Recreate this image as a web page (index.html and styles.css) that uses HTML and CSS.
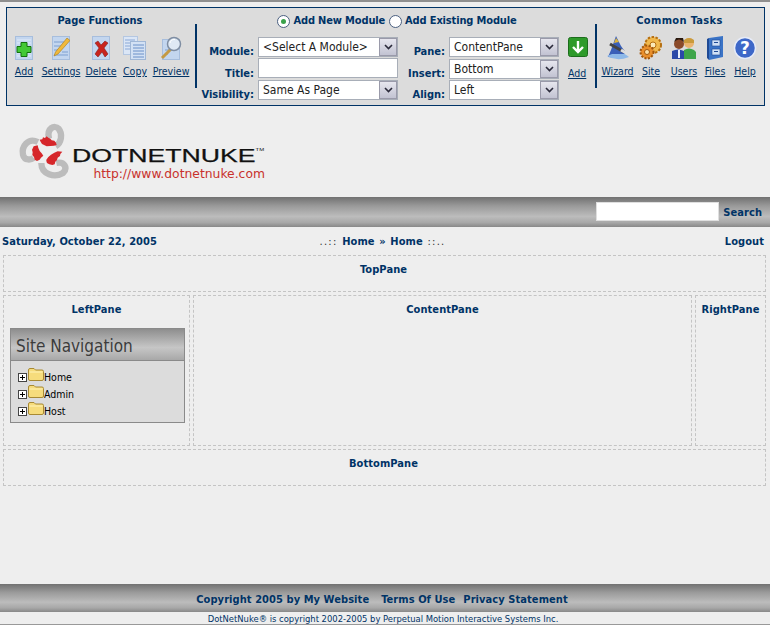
FILE: index.html
```html
<!DOCTYPE html>
<html lang="en">
<head>
<meta charset="utf-8">
<title>Home</title>
<link rel="stylesheet" href="styles.css">
</head>
<body>
<div class="page">
  <section class="panel">
    <div class="group group-left">
      <h3 class="group-title">Page Functions</h3>
      <div class="tools">
        <a class="tool t-add" href="#"><svg class="ico" viewBox="0 0 18 24"><rect x=".5" y=".5" width="17" height="23" fill="#c3d6ef" stroke="#a7bedd"/><path d="M2 4h14M2 7h14M2 17h14M2 20h14" stroke="#e2ecf9"/><path d="M6 6.500h6v4h4v6h-4v4H6v-4H2v-6h4z" fill="#43c936" stroke="#14700e"/></svg><span>Add</span></a>
        <a class="tool t-settings" href="#"><svg class="ico" viewBox="0 0 18 24"><rect x=".5" y=".5" width="17" height="23" fill="#c3d6ef" stroke="#a7bedd"/><path d="M2 6h12M2 10h9M2 14h6M10 16h6M2 19h14" stroke="#7d9fd0"/><path d="M15 2l3 2.500L6 18l-4 2 1.500-4z" fill="#f0b93c" stroke="#a87a18" stroke-width=".6"/></svg><span>Settings</span></a>
        <a class="tool t-delete" href="#"><svg class="ico" viewBox="0 0 18 24"><rect x=".5" y=".5" width="17" height="23" fill="#c3d6ef" stroke="#a7bedd"/><path d="M3 7l3-2 3 4 4-4 3 2-4 5 4 6-3 3-3-5-4 5-3-3 4-6z" fill="#c8241e" stroke="#7a1512" stroke-width=".5"/></svg><span>Delete</span></a>
        <a class="tool t-copy" href="#"><svg class="ico" viewBox="0 0 24 24"><rect x=".5" y=".5" width="14" height="18" fill="#dbe6f6" stroke="#b4c7e2"/><path d="M2 4h10M2 7h10M2 10h10M2 13h10" stroke="#8aa8d6"/><rect x="7.500" y="5.500" width="15" height="18" fill="#d3e1f4" stroke="#a0b7d6"/><path d="M10 9h11M10 12h11M10 15h11M10 18h11M10 21h11" stroke="#6a90c8"/></svg><span>Copy</span></a>
        <a class="tool t-preview" href="#"><svg class="ico" viewBox="0 0 22 24"><rect x="2.500" y="3.500" width="17" height="20" fill="#c3d6ef" stroke="#a7bedd"/><path d="M5 14h4M5 18h3" stroke="#7d9fd0"/><path d="M11 13L2 22" stroke="#c49a44" stroke-width="3"/><circle cx="14" cy="8" r="6.500" fill="#dfe9f4" stroke="#7f8ea3" stroke-width="1.500"/><path d="M10 7a4.500 4.500 0 0 1 5-3.500" stroke="#fff" fill="none"/></svg><span>Preview</span></a>
      </div>
    </div>
    <div class="group group-mid">
      <div class="radios">
        <label class="radio"><span class="dot on"></span>Add New Module</label>
        <label class="radio"><span class="dot"></span>Add Existing Module</label>
      </div>
      <div class="form">
        <label class="f-lab">Module:</label>
        <div class="sel s-wide"><select><option>&lt;Select A Module&gt;</option></select><i class="arrow"><svg viewBox="0 0 9 6"><path d="M1 1l3.500 3.500L8 1" fill="none" stroke="#2a2a3a" stroke-width="1.600"/></svg></i></div>
        <label class="f-lab">Pane:</label>
        <div class="sel s-narrow"><select><option>ContentPane</option></select><i class="arrow"><svg viewBox="0 0 9 6"><path d="M1 1l3.500 3.500L8 1" fill="none" stroke="#2a2a3a" stroke-width="1.600"/></svg></i></div>
        <svg class="go" viewBox="0 0 20 20"><rect x=".5" y=".5" width="19" height="19" rx="2" fill="#2e9a2a" stroke="#1c6d1c"/><path d="M10 4v11M5 10l5 5 5-5" fill="none" stroke="#fff" stroke-width="2.400"/></svg>
        <label class="f-lab">Title:</label>
        <input class="txt s-wide" type="text">
        <label class="f-lab">Insert:</label>
        <div class="sel s-narrow s-insert"><select><option>Bottom</option></select><i class="arrow"><svg viewBox="0 0 9 6"><path d="M1 1l3.500 3.500L8 1" fill="none" stroke="#2a2a3a" stroke-width="1.600"/></svg></i></div>
        <a class="go-add" href="#">Add</a>
        <label class="f-lab">Visibility:</label>
        <div class="sel s-wide"><select><option>Same As Page</option></select><i class="arrow"><svg viewBox="0 0 9 6"><path d="M1 1l3.500 3.500L8 1" fill="none" stroke="#2a2a3a" stroke-width="1.600"/></svg></i></div>
        <label class="f-lab">Align:</label>
        <div class="sel s-narrow"><select><option>Left</option></select><i class="arrow"><svg viewBox="0 0 9 6"><path d="M1 1l3.500 3.500L8 1" fill="none" stroke="#2a2a3a" stroke-width="1.600"/></svg></i></div>
      </div>
    </div>
    <div class="group group-right">
      <h3 class="group-title">Common Tasks</h3>
      <div class="tools tools-right">
        <a class="tool" href="#"><svg class="ico ico-l" viewBox="0 0 24 24"><path d="M10 0l5 10 5 7-7 5-11-1 3-7z" fill="#3a5fb8"/><path d="M1 20q10 6 22 1l-4-3H6z" fill="#8db8e8"/><path d="M4 8l14 8" stroke="#444" stroke-width="3"/><path d="M15 14l6 3.500" stroke="#ddd" stroke-width="3"/><path d="M10 2l3 4-5 1z" fill="#e0b53a"/></svg><span>Wizard</span></a>
        <a class="tool" href="#"><svg class="ico ico-l" viewBox="0 0 24 24"><circle cx="14" cy="9" r="8" fill="#f0b84c" stroke="#b66f10" stroke-dasharray="2.500 1.500" stroke-width="2"/><circle cx="14" cy="9" r="3" fill="#fbe9b8" stroke="#b66f10"/><circle cx="8" cy="16" r="6.500" fill="#e98f2c" stroke="#a0560c" stroke-dasharray="2 1.500" stroke-width="2"/><circle cx="8" cy="16" r="2.500" fill="#fbe0a8" stroke="#a0560c"/></svg><span>Site</span></a>
        <a class="tool" href="#"><svg class="ico ico-l" viewBox="0 0 24 24"><circle cx="17" cy="7" r="5" fill="#eab36e"/><path d="M12 4q5-4 10 0v3H12z" fill="#c99a3c"/><path d="M12 23v-9q5-3 10 0l2 2v7z" fill="#3fa54a"/><circle cx="7" cy="8" r="5" fill="#8a4a2a"/><path d="M2 6q5-5 10 0l-1-4H4z" fill="#2a1a10"/><path d="M0 23V15q6-3 12 0v8z" fill="#2c49a8"/><path d="M6 14h2v8H6z" fill="#e8eefb"/></svg><span>Users</span></a>
        <a class="tool" href="#"><svg class="ico ico-f" viewBox="0 0 18 24"><path d="M3 2l14-2v21l-14 3z" fill="#3a73c6"/><path d="M3 2L1 3v19l2 2z" fill="#1f4a94"/><path d="M6 4h8v6H6zM6 13h8v6H6z" fill="#cfe0f6" stroke="#1f4a94" stroke-width=".6"/><path d="M8 6.500h4M8 15.500h4" stroke="#1f4a94" stroke-width="1.200"/></svg><span>Files</span></a>
        <a class="tool" href="#"><svg class="ico ico-l" viewBox="0 0 24 24"><circle cx="12" cy="12" r="10.500" fill="#3e68c8" stroke="#e6ebf8" stroke-width="1.500"/><text x="12" y="18" class="q">?</text></svg><span>Help</span></a>
      </div>
    </div>
  </section>

  <header class="brand">
    <svg class="logo" viewBox="0 0 171 198"><g fill="none" stroke="#bcbcbc" stroke-width="19"><path d="M108 62C100 30 125 20 137 32C150 48 145 75 128 85"/><path d="M75 72C45 58 25 85 30 110C35 130 55 125 62 120"/><path d="M85 135C85 170 125 180 150 165C165 150 155 130 130 135"/></g><path d="M80 65l8-1 2-6 6 2 5-5 5 4 6 3 4 5 8 1 5 6 2 7-8 2-22 2-14-7-5-8z" fill="#d6262a"/><path d="M62 85l6-2 6-1 2 8 4 9 6 7 5 7-7 6-4 6-8 4-7-4-2-8-5-6 1-8-2-8 3-6z" fill="#d6262a"/><path d="M100 125l6-8 8-7 10-6 10-4 14 1-6 7-1 6-7 5-2 7-5 5-2 8-7 2-9-2-7-4-2-6z" fill="#d6262a"/></svg>
    <div class="brand-text">
      <div class="wordmark">DOTNETNUKE<sup>TM</sup></div>
      <div class="url">http://www.dotnetnuke.com</div>
    </div>
  </header>

  <div class="band band-search">
    <input class="search-input" type="text">
    <a class="lnk" href="#">Search</a>
  </div>

  <div class="infobar">
    <span class="lnk date">Saturday, October 22, 2005</span>
    <span class="crumbs"><span class="sep">..::</span> <a class="lnk" href="#">Home</a> » <a class="lnk" href="#">Home</a> <span class="sep">::..</span></span>
    <a class="lnk logout" href="#">Logout</a>
  </div>

  <main class="panes">
    <div class="pane pane-top lnk">TopPane</div>
    <div class="pane-row">
      <div class="pane pane-left">
        <div class="lnk pane-left-title">LeftPane</div>
        <div class="navbox">
          <div class="navbox-head">Site Navigation</div>
          <ul class="tree">
            <li><i class="plus"></i><svg class="folder" viewBox="0 0 16 13"><path d="M.5 11V2Q.5.500 2 .500h4L7.500 2H14q1.500 0 1.500 1.500V11q0 1.500-1.500 1.500H2Q.5 12.500.5 11z" fill="#f6dc7c" stroke="#a88a34"/><path d="M1.500 4h13" stroke="#fff3b8"/></svg>Home</li>
            <li><i class="plus"></i><svg class="folder" viewBox="0 0 16 13"><path d="M.5 11V2Q.5.500 2 .500h4L7.500 2H14q1.500 0 1.500 1.500V11q0 1.500-1.500 1.500H2Q.5 12.500.5 11z" fill="#f6dc7c" stroke="#a88a34"/><path d="M1.500 4h13" stroke="#fff3b8"/></svg>Admin</li>
            <li><i class="plus"></i><svg class="folder" viewBox="0 0 16 13"><path d="M.5 11V2Q.5.500 2 .500h4L7.500 2H14q1.500 0 1.500 1.500V11q0 1.500-1.500 1.500H2Q.5 12.500.5 11z" fill="#f6dc7c" stroke="#a88a34"/><path d="M1.500 4h13" stroke="#fff3b8"/></svg>Host</li>
          </ul>
        </div>
      </div>
      <div class="pane pane-content lnk">ContentPane</div>
      <div class="pane pane-right lnk">RightPane</div>
    </div>
    <div class="pane pane-bottom lnk">BottomPane</div>
  </main>

  <footer class="foot">
    <div class="band band-foot">
      <a class="lnk f1" href="#">Copyright 2005 by My Website</a>
      <a class="lnk f2" href="#">Terms Of Use</a>
      <a class="lnk" href="#">Privacy Statement</a>
    </div>
    <div class="legal">DotNetNuke® is copyright 2002-2005 by Perpetual Motion Interactive Systems Inc.</div>
  </footer>
</div>
</body>
</html>
```
FILE: styles.css
```css
* { box-sizing: border-box; }
html, body { margin: 0; padding: 0; }
body {
  background: #eeeeee;
  font-family: "DejaVu Sans Condensed", "DejaVu Sans", sans-serif;
  font-size: 11px;
  color: #003366;
}
.page {
  width: 770px;
  height: 625px;
  display: flex;
  flex-direction: column;
  border-top: 2px solid #8f8f8f;
  overflow: hidden;
}
a { color: #003366; }
.lnk { color: #003366; font-weight: bold; text-decoration: none; letter-spacing: .07px; }

/* control panel */
.panel {
  margin: 5px 5px 0 6px;
  height: 99px;
  flex: none;
  display: flex;
  background: #dcdcdc;
  border: 1px solid #003366;
}
.group-title { margin: 0; font-size: 11px; text-align: center; line-height: 14px; }
.group-left { width: 190px; padding-top: 6px; position: relative; }
.group-left .group-title { padding-right: 4px; }
.group-right .group-title { letter-spacing: .35px; }
.group-left::after, .group-right::before {
  content: "";
  position: absolute;
  top: 16px;
  height: 64px;
  width: 2px;
  background: #003366;
}
.group-left::after { right: 0; }
.group-right::before { left: 0; }
.tools { display: flex; padding: 8px 0 0 7px; }
.tool { display: flex; flex-direction: column; align-items: center; font-size: 10.500px; line-height: 12px; text-decoration: none; }
.tool span { margin-top: 5px; text-decoration: underline; }
.ico { width: 18px; height: 24px; display: block; flex: none; }
.t-copy .ico { width: 24px; }
.t-preview .ico { width: 22px; }
.ico-l { width: 24px; }
.ico-f { width: 18px; }
.t-add { width: 20px; margin-right: 7px; }
.t-settings { width: 40px; margin-right: 4px; }
.t-delete { width: 32px; margin-right: 5px; }
.t-copy { width: 26px; margin-right: 4px; }
.t-preview { width: 38px; }

.group-mid { width: 398px; padding-top: 6px; }
.radios { display: flex; justify-content: center; gap: 4px; font-weight: bold; line-height: 14px; padding-left: 2px; letter-spacing: -.15px; }
.radio { display: flex; align-items: center; gap: 3px; }
.dot {
  width: 13px; height: 13px; border-radius: 50%;
  border: 1px solid #4a5f80; background: #fff;
  display: flex; align-items: center; justify-content: center;
}
.dot.on::after { content: ""; width: 5px; height: 5px; border-radius: 50%; background: #3aa24a; }
.form {
  display: grid;
  grid-template-columns: 57px 140px 43px 110px 28px;
  grid-template-rows: 21px 22px 21px;
  column-gap: 4px;
  margin-top: 9px;
  font-weight: bold;
}
.f-lab { text-align: right; align-self: end; line-height: 13px; }
.sel {
  display: flex; height: 20px;
  background: #fff; border: 1px solid #a8aeb8;
}
.s-insert { margin-top: 1px; }
.sel select {
  flex: 1; min-width: 0; border: 0; background: transparent;
  appearance: none; -webkit-appearance: none;
  font: 12px "DejaVu Sans Condensed", "DejaVu Sans", sans-serif; color: #222; padding: 0 0 0 4px; margin: 0;
}
.arrow {
  width: 18px; background: linear-gradient(#e6e6ee, #c2c3d2);
  border: 1px solid #9a9aaa; display: flex; align-items: center; justify-content: center;
}
.arrow svg { width: 9px; height: 6px; }
.txt { height: 20px; border: 1px solid #a8aeb8; background: #fff; padding: 0; margin: 0; }
.go { width: 20px; height: 20px; grid-column: 5; grid-row: 1; margin-left: 5px; }
.go-add { grid-column: 5; grid-row: 2; margin-left: 5px; text-decoration: underline; font-weight: normal; font-size: 10.500px; align-self: end; line-height: 14px; }

.group-right { flex: 1; position: relative; padding-top: 6px; }
.tools-right { padding: 8px 0 0 6px; }
.tools-right .tool:nth-child(1) { width: 33px; margin-right: 8px; }
.tools-right .tool:nth-child(2) { width: 18px; margin-right: 10px; }
.tools-right .tool:nth-child(3) { width: 28px; margin-right: 6px; }
.tools-right .tool:nth-child(4) { width: 22px; margin-right: 8px; }
.tools-right .tool:nth-child(5) { width: 22px; }
.q { font: bold 17px "DejaVu Sans", sans-serif; fill: #fff; text-anchor: middle; }

/* brand */
.brand { height: 91px; flex: none; display: flex; padding: 12px 0 0 13px; }
.logo { width: 57px; height: 66px; flex: none; }
.brand-text { margin: 28px 0 0 2px; width: 193px; }
.wordmark {
  font: 18px/20px "Liberation Sans", sans-serif; color: #111;
  transform: scaleX(1.480); transform-origin: left; white-space: nowrap;
  -webkit-text-stroke: .25px #111;
}
.wordmark sup { font-size: 4px; vertical-align: top; line-height: 8px; -webkit-text-stroke: 0; }
.url { font: 12.350px/14px "DejaVu Sans", sans-serif; color: #c8312c; text-align: right; margin-top: 1px; }

/* bands */
.band { flex: none; background: linear-gradient(#717171, #9a9a9a 30%, #bcbcbc 65%, #a8a8a8 85%, #888888); }
.band-search { height: 30px; display: flex; align-items: center; justify-content: flex-end; padding-right: 8px; gap: 4px; }
.search-input { width: 123px; height: 19px; border: 1px solid #dfdfdf; background: #fff; padding: 0; margin: 0 0 2px; }
.infobar {
  flex: none; height: 28px; display: grid; grid-template-columns: 1fr auto 1fr; align-items: center;
  padding: 0 6px 0 2px;
}
.logout { justify-self: end; }
.crumbs { color: #003366; font-weight: bold; word-spacing: 1.200px; padding-right: 1px; }
.sep { font-weight: normal; letter-spacing: 1.300px; color: #333; }

/* panes */
.panes { flex: 1; padding: 0 4px 0 3px; display: flex; flex-direction: column; gap: 3px; }
.pane {
  border: 1px dashed #c4c4c4;
  text-align: center; padding-top: 7px; line-height: 14px;
}
.pane-top { height: 37px; padding-right: 2px; }
.pane-bottom { height: 37px; padding-right: 2px; }
.pane-row { display: flex; gap: 3px; height: 151px; }
.pane-left { width: 187px; padding-left: 6px; padding-right: 4px; }
.pane-left-title { padding-right: 2px; }
.pane-content { flex: 1; }
.pane-right { width: 71px; }
.navbox { margin-top: 11px; height: 95px; border: 1px solid #8a8a8a; background: #dcdcdc; text-align: left; }
.navbox-head {
  height: 32px; background: linear-gradient(#8e8e8e, #c6c6c6 60%, #a8a8a8);
  border-bottom: 1px solid #8a8a8a;
  color: #3c3c3c; font: 17px/34px "DejaVu Sans Condensed", sans-serif; padding-left: 5px;
}
.tree { list-style: none; margin: 8px 0 0 7px; padding: 0; font: 10.500px/17px "DejaVu Sans Condensed", sans-serif; color: #000; }
.tree li { display: flex; align-items: flex-end; height: 17px; }
.plus {
  width: 9px; height: 9px; border: 1px solid #444; background: #fff; margin: 0 1px 4px 0; flex: none;
  background-image: linear-gradient(#000,#000), linear-gradient(#000,#000);
  background-size: 5px 1px, 1px 5px; background-position: center; background-repeat: no-repeat;
}
.folder { width: 16px; height: 13px; margin-bottom: 5px; flex: none; }

/* footer */
.foot { flex: none; }
.band-foot { height: 28px; display: flex; justify-content: center; align-items: center; padding-top: 2px; padding-right: 6px; }
.f1 { margin-right: 12px; }
.f2 { margin-right: 8px; }
.legal { height: 13px; text-align: center; font-size: 9.350px; line-height: 13px; color: #003366; border-bottom: 1px solid #999; padding-right: 4px; }
```
